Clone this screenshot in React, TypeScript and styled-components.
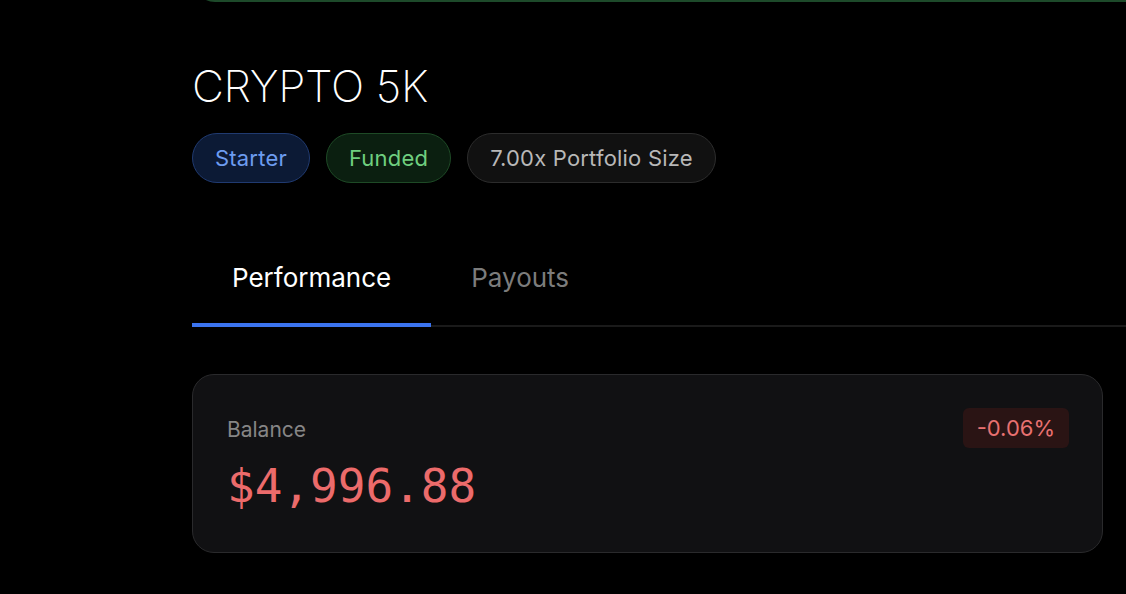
import React from 'react';
import styled, { createGlobalStyle } from 'styled-components';

const GlobalStyle = createGlobalStyle`
  html, body {
    margin: 0;
    padding: 0;
    background: #000;
    overflow: hidden;
  }
  body {
    font-family: Inter, 'Noto Sans', sans-serif;
    color: #fff;
  }
`;

const Page = styled.main`
  width: 1126px;
  height: 594px;
  padding-left: 192px;
  box-sizing: border-box;
  overflow: hidden;
`;

const PrevCard = styled.div`
  margin-top: -40px;
  margin-left: 2px;
  width: 1000px;
  height: 42px;
  border: 2px solid #1d4a2a;
  border-radius: 22px;
  box-sizing: border-box;
`;

const Title = styled.h1`
  margin: 62px 0 0;
  font-size: 44px;
  font-weight: 200;
  line-height: 1;
  letter-spacing: -0.3px;
`;

const BadgeRow = styled.div`
  display: flex;
  gap: 16px;
  margin-top: 25px;
`;

const tones = {
  blue: { bg: '#0c1a35', border: '#203a70', color: '#6d9cf0' },
  green: { bg: '#0b1f10', border: '#1e4a26', color: '#6fcf7f' },
  gray: { bg: '#111', border: '#2c2c2c', color: '#b8b8b8' },
};

const Badge = styled.span<{ $tone: keyof typeof tones }>`
  display: inline-flex;
  align-items: center;
  height: 50px;
  padding: 0 22px;
  box-sizing: border-box;
  border-radius: 25px;
  font-size: 22px;
  letter-spacing: 0.2px;
  background: ${(p) => tones[p.$tone].bg};
  border: 1.5px solid ${(p) => tones[p.$tone].border};
  color: ${(p) => tones[p.$tone].color};
`;

const Tabs = styled.nav`
  display: flex;
  margin-top: 50px;
  border-bottom: 2px solid #1a1a1a;
  margin-right: -200px;
`;

const Tab = styled.div<{ $active?: boolean }>`
  padding: 29px 40px 30px;
  font-size: 26px;
  color: ${(p) => (p.$active ? '#fff' : '#7c7c7c')};
  border-bottom: 4px solid ${(p) => (p.$active ? '#3b74f0' : 'transparent')};
  margin-bottom: -2px;
`;

const Card = styled.section`
  margin-top: 47px;
  width: 911px;
  height: 179px;
  box-sizing: border-box;
  background: #111113;
  border: 1.5px solid #2a2a2c;
  border-radius: 22px;
  padding: 33px 33px 0 34px;
  display: flex;
  justify-content: space-between;
  align-items: flex-start;
`;

const Stat = styled.div`
  display: flex;
  flex-direction: column;
`;

const Label = styled.span`
  font-size: 21px;
  color: #868686;
  margin-top: 9px;
`;

const Value = styled.span`
  font-family: 'DejaVu Sans Mono', monospace;
  font-size: 46px;
  color: #ec6b6b;
  margin-top: 17px;
`;

const Change = styled.span`
  display: inline-flex;
  align-items: center;
  height: 40px;
  padding: 0 14px;
  border-radius: 6px;
  background: #2a1414;
  color: #e87171;
  font-size: 22px;
`;

export default function App() {
  return (
    <>
      <GlobalStyle />
      <Page>
        <PrevCard />
        <Title>CRYPTO 5K</Title>
        <BadgeRow>
          <Badge $tone="blue">Starter</Badge>
          <Badge $tone="green">Funded</Badge>
          <Badge $tone="gray">7.00x Portfolio Size</Badge>
        </BadgeRow>
        <Tabs>
          <Tab $active>Performance</Tab>
          <Tab>Payouts</Tab>
        </Tabs>
        <Card>
          <Stat>
            <Label>Balance</Label>
            <Value>$4,996.88</Value>
          </Stat>
          <Change>-0.06%</Change>
        </Card>
      </Page>
    </>
  );
}
